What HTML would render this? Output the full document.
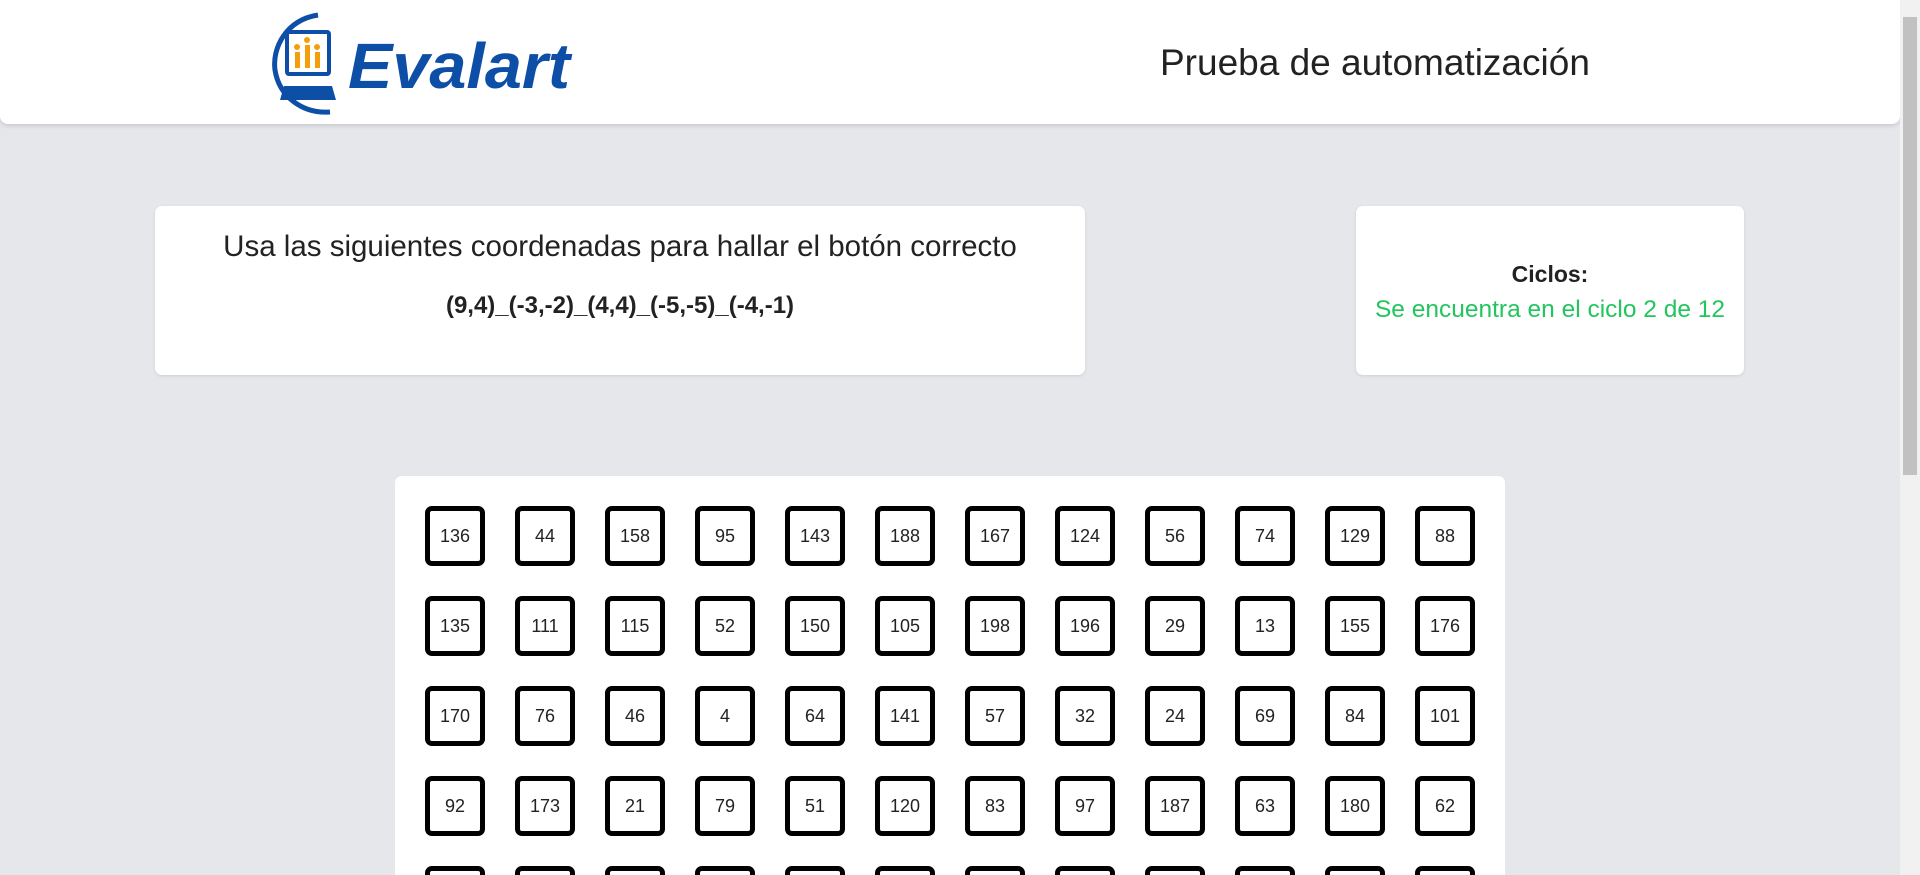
<!DOCTYPE html>
<html><head><meta charset="utf-8"><style>
*{box-sizing:border-box;margin:0;padding:0}
html,body{width:1920px;height:875px;overflow:hidden}
body{background:#e5e7eb;font-family:"Liberation Sans",sans-serif;color:#1f2937;position:relative}
.hdr{position:absolute;left:0;top:0;width:1900px;height:124px;background:#fff;border-radius:0 0 8px 8px;box-shadow:0 2px 4px rgba(0,0,0,.12)}
.title{position:absolute;left:1160px;top:42px;font-size:37px;color:#222}
.card{position:absolute;background:#fff;border-radius:7px;box-shadow:0 1px 3px rgba(0,0,0,.1);text-align:center}
.sb{position:absolute;right:0;top:0;width:20px;height:875px;background:#f1f1f1}
.thumb{position:absolute;right:3px;top:17px;width:14px;height:458px;background:#c1c1c1}
.panel{position:absolute;left:395px;top:476px;width:1110px;height:399px;background:#fff;border-radius:7px 7px 0 0}
.b{position:absolute;width:60px;height:60px;border:5px solid #000;border-radius:7px;display:flex;align-items:center;justify-content:center;font-size:18px;color:#222}
</style></head><body>
<div class="hdr">
<svg style="position:absolute;left:270px;top:10px" width="310" height="106" viewBox="0 0 310 106">
<path d="M48 5 C16 10 2 38 5 60 C9 86 32 104 60 102" fill="none" stroke="#0d4ea6" stroke-width="5"/>
<rect x="17" y="22" width="42" height="42" rx="2" fill="none" stroke="#0d4ea6" stroke-width="4"/>
<rect x="25" y="42" width="5" height="16" fill="#f59e0b"/><rect x="35" y="35" width="5" height="23" fill="#f59e0b"/><rect x="45" y="42" width="5" height="16" fill="#f59e0b"/>
<circle cx="27" cy="37" r="3" fill="#f59e0b"/><circle cx="37" cy="30" r="3" fill="#f59e0b"/><circle cx="47" cy="37" r="3" fill="#f59e0b"/>
<path d="M14 76 L62 76 L66 90 L10 90Z" fill="#0d4ea6"/>
<text x="78" y="78" font-family="Liberation Sans" font-style="italic" font-weight="bold" font-size="64" fill="#0d4ea6" textLength="222" lengthAdjust="spacingAndGlyphs">Evalart</text>
</svg>
<div class="title">Prueba de automatización</div>
</div>
<div class="card" style="left:155px;top:206px;width:930px;height:169px">
<div style="margin-top:24px;font-size:29.5px;color:#222">Usa las siguientes coordenadas para hallar el botón correcto</div>
<div style="margin-top:28px;font-size:24px;font-weight:bold;color:#222">(9,4)_(-3,-2)_(4,4)_(-5,-5)_(-4,-1)</div>
</div>
<div class="card" style="left:1356px;top:206px;width:388px;height:169px">
<div style="margin-top:55px;font-size:23px;font-weight:bold;color:#222">Ciclos:</div>
<div style="margin-top:8px;font-size:24.5px;color:#22c55e">Se encuentra en el ciclo 2 de 12</div>
</div>
<div class="panel"></div>
<div id="g"></div>
<div class="sb"><div class="thumb"></div></div>
<script>
var n=[[136,44,158,95,143,188,167,124,56,74,129,88],[135,111,115,52,150,105,198,196,29,13,155,176],[170,76,46,4,64,141,57,32,24,69,84,101],[92,173,21,79,51,120,83,97,187,63,180,62],[1,2,3,5,6,7,8,9,10,11,12,14]];
var h='';for(var r=0;r<5;r++)for(var c=0;c<12;c++){var t=506+r*90;h+='<div class="b" style="left:'+(425+c*90)+'px;top:'+t+'px;'+(r==4?'height:'+(875-t+10)+'px;align-items:flex-start;padding-top:15px':'')+'">'+n[r][c]+'</div>';}
document.getElementById('g').innerHTML=h;
</script>
</body></html>
